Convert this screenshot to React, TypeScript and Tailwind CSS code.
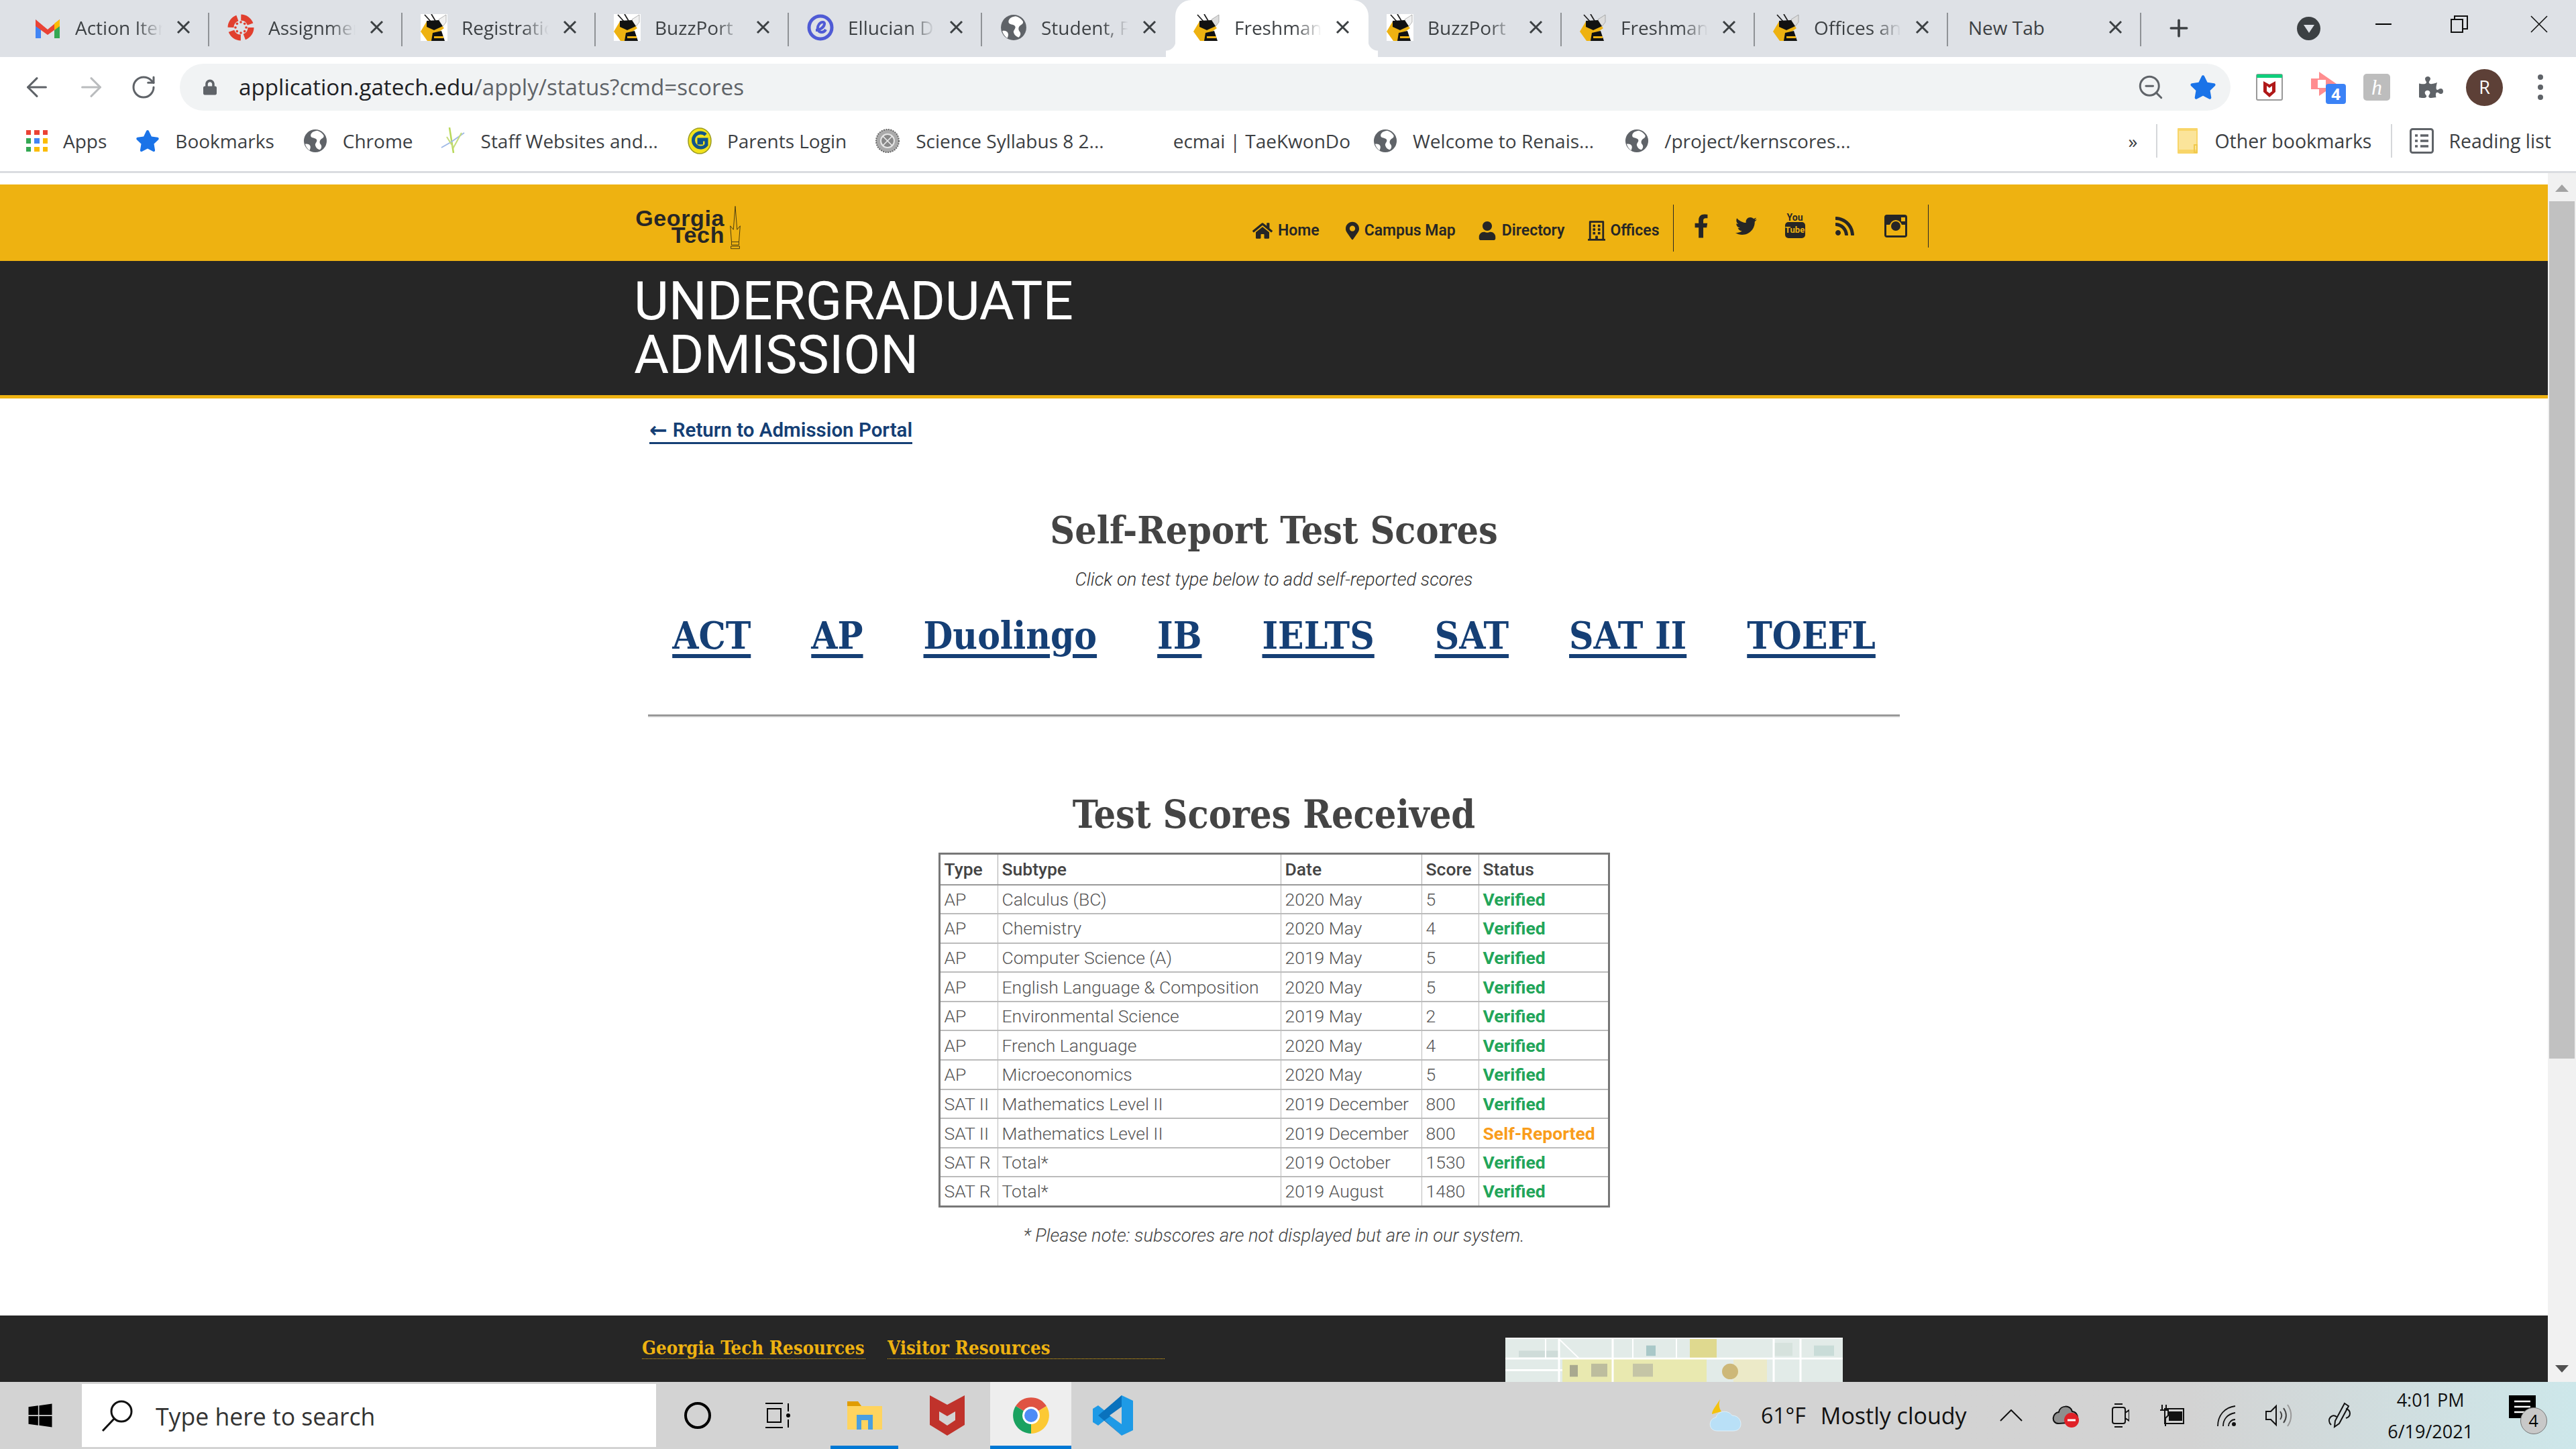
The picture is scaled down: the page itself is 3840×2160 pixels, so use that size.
import { ArrowLeft, ArrowRight, RotateCw, Plus, Minus, ZoomOut } from "lucide-react";
import {
  FaFacebookF,
  FaHome,
  FaLock,
  FaMapMarkerAlt,
  FaPuzzlePiece,
  FaRegBuilding,
  FaRss,
  FaStar,
  FaTwitter,
  FaUser,
  FaWindows,
} from "react-icons/fa";

const UI_FONT = "font-['Open_Sans','Noto_Sans',sans-serif]";

function Cross({ className = "" }: { className?: string }) {
  return (
    <svg viewBox="0 0 21 21" className={className}>
      <path d="M2 2L19 19M19 2L2 19" stroke="currentColor" strokeWidth="3" fill="none" />
    </svg>
  );
}

function Gmail() {
  return (
    <svg viewBox="0 0 40 40" className="h-[40px] w-[40px]">
      <path d="M2 8v28h8V18z" fill="#4285f4" />
      <path d="M38 8v28h-8V18z" fill="#34a853" />
      <path d="M2 8l18 15L38 8v10L20 31 2 18z" fill="#ea4335" />
      <path d="M30 14l8-6v10l-8 6z" fill="#fbbc04" />
    </svg>
  );
}

function Canvas() {
  const angles = [0, 45, 90, 135, 180, 225, 270, 315];
  return (
    <svg viewBox="0 0 40 40" className="h-[40px] w-[40px]">
      <circle cx="20" cy="20" r="15" fill="none" stroke="#e13f2e" strokeWidth="9" strokeDasharray="18 5.5" />
      {angles.map((a) => (
        <circle
          key={a}
          cx={20 + 8 * Math.cos((a * Math.PI) / 180)}
          cy={20 + 8 * Math.sin((a * Math.PI) / 180)}
          r="1.8"
          fill="#e13f2e"
        />
      ))}
    </svg>
  );
}

function Buzz({ plain = false }: { plain?: boolean }) {
  return (
    <svg viewBox="0 0 40 40" className="h-[40px] w-[40px]">
      {!plain && <rect width="40" height="40" fill="#fff" />}
      <path d="M6 1l10 11M16 0l6 10" stroke="#222" strokeWidth="1.8" fill="none" />
      <path d="M27 8l11-7v11l-7 9z" fill={plain ? "#dcdcdc" : "#f1f1f1"} stroke="#888" strokeWidth="0.6" />
      <path d="M9 11h17l9 10-10 7 3 12H10L0 26z" fill="#eeb211" />
      <path d="M9 10l18-1 6 9-13 6-11-5z" fill="#111" />
      <path d="M18 28l13-3 5 15H16z" fill="#111" />
      <path d="M20 33h14v3H20z" fill="#eeb211" />
    </svg>
  );
}

function Ellucian() {
  return (
    <svg viewBox="0 0 40 40" className="h-[40px] w-[40px]">
      <circle cx="20" cy="20" r="17" fill="none" stroke="#4f5bd5" strokeWidth="5" />
      <path d="M13 24c6 0 12-4 13-9 1-4-5-4-8 0-4 6-2 12 4 12 3 0 5-2 6-4" fill="none" stroke="#4f5bd5" strokeWidth="4" />
    </svg>
  );
}

function Globe({ size = "h-[38px] w-[38px]" }: { size?: string }) {
  return (
    <svg viewBox="0 0 38 38" className={size}>
      <circle cx="19" cy="19" r="18" fill="#5f6368" />
      <path d="M22 3c-8 1-11 5-10 9 1 3 7 2 9 5s-3 6-2 9c1 4 4 6 7 7 4-3 3-7 1-9-2-3-1-7 3-9 2-1 3-3 2-5-3-4-6-6-10-7z" fill="#fff" />
      <path d="M3 24c3-1 7 0 8 3 1 2 0 5-1 7-3-2-6-6-7-10z" fill="#fff" />
    </svg>
  );
}

function Apps() {
  const dots = ["#ea4335", "#ea4335", "#ea4335", "#34a853", "#4285f4", "#fbbc04", "#34a853", "#fbbc04", "#fbbc04"];
  return (
    <div className="grid h-[32px] w-[32px] grid-cols-3 gap-[5px]">
      {dots.map((c, i) => (
        <span key={i} style={{ background: c }} />
      ))}
    </div>
  );
}

function StaffIcon() {
  return (
    <svg viewBox="0 0 38 40" className="h-[40px] w-[38px]">
      <path d="M14 0l6 38" stroke="#b8d85a" strokeWidth="2.5" fill="none" />
      <path d="M2 30l14-8 20-14" stroke="#9fb9e6" strokeWidth="2" fill="none" />
      <path d="M10 14l10 16 12-22" stroke="#c5dc7a" strokeWidth="2" fill="none" />
    </svg>
  );
}

function ParentsG() {
  return (
    <svg viewBox="0 0 36 40" className="h-[40px] w-[36px]">
      <ellipse cx="18" cy="20" rx="17" ry="19" fill="#f2e21c" stroke="#9a9a20" strokeWidth="1.5" />
      <path d="M27 11a11 11 0 1 0 1 15v-8H17v5h6" fill="none" stroke="#12558a" strokeWidth="5" />
    </svg>
  );
}

function Seal() {
  return (
    <svg viewBox="0 0 38 38" className="h-[38px] w-[38px]">
      <circle cx="19" cy="19" r="17" fill="#aaa" stroke="#666" strokeWidth="2" strokeDasharray="2 1.5" />
      <circle cx="19" cy="19" r="10" fill="#888" stroke="#e6e6e6" strokeWidth="2" />
      <path d="M12 12l14 14M26 12L12 26" stroke="#eee" strokeWidth="1.5" />
    </svg>
  );
}

function FolderIcon() {
  return (
    <svg viewBox="0 0 30 38" className="h-[38px] w-[30px]">
      <rect x="0" y="0" width="30" height="38" rx="1" fill="#f8d568" />
      <rect x="2" y="4" width="26" height="28" fill="#fbe49a" />
      <path d="M25 36V25h4v11z" fill="none" stroke="#f0c94c" strokeWidth="2" />
    </svg>
  );
}

function ReadingIcon() {
  return (
    <svg viewBox="0 0 36 38" className="h-[38px] w-[36px]">
      <rect x="1.5" y="1.5" width="33" height="35" rx="3" fill="none" stroke="#5f6368" strokeWidth="3" />
      <path d="M8 11h4M16 11h12M8 19h4M16 19h12M8 27h4M16 27h12" stroke="#5f6368" strokeWidth="3.5" />
    </svg>
  );
}

const TABS = [
  { title: "Action Items", icon: <Gmail /> },
  { title: "Assignments", icon: <Canvas /> },
  { title: "Registration", icon: <Buzz /> },
  { title: "BuzzPort | Home", icon: <Buzz /> },
  { title: "Ellucian Degree", icon: <Ellucian /> },
  { title: "Student, Faculty", icon: <Globe size="h-[40px] w-[40px]" /> },
  { title: "Freshman Admission", icon: <Buzz plain />, active: true },
  { title: "BuzzPort | Home", icon: <Buzz /> },
  { title: "Freshman Info", icon: <Buzz plain /> },
  { title: "Offices and Units", icon: <Buzz plain /> },
];

const BOOKMARKS = [
  { label: "Apps", icon: <Apps />, cls: "ml-[39px]" },
  { label: "Bookmarks", icon: <FaStar className="h-[34px] w-[36px] text-[#1a73e8]" />, cls: "ml-[43px]" },
  { label: "Chrome", icon: <Globe size="h-[36px] w-[36px]" />, cls: "ml-[43px]" },
  { label: "Staff Websites and...", icon: <StaffIcon />, cls: "ml-[40px]" },
  { label: "Parents Login", icon: <ParentsG />, cls: "ml-[44px]" },
  { label: "Science Syllabus 8 2...", icon: <Seal />, cls: "ml-[42px]" },
  { label: "ecmai | TaeKwonDo", icon: null, cls: "ml-[103px]" },
  { label: "Welcome to Renais...", icon: <Globe size="h-[36px] w-[36px]" />, cls: "ml-[34px]" },
  { label: "/project/kernscores...", icon: <Globe size="h-[36px] w-[36px]" />, cls: "ml-[46px]" },
];

const SCORES = [
  ["AP", "Calculus (BC)", "2020 May", "5", "Verified"],
  ["AP", "Chemistry", "2020 May", "4", "Verified"],
  ["AP", "Computer Science (A)", "2019 May", "5", "Verified"],
  ["AP", "English Language & Composition", "2020 May", "5", "Verified"],
  ["AP", "Environmental Science", "2019 May", "2", "Verified"],
  ["AP", "French Language", "2020 May", "4", "Verified"],
  ["AP", "Microeconomics", "2020 May", "5", "Verified"],
  ["SAT II", "Mathematics Level II", "2019 December", "800", "Verified"],
  ["SAT II", "Mathematics Level II", "2019 December", "800", "Self-Reported"],
  ["SAT R", "Total*", "2019 October", "1530", "Verified"],
  ["SAT R", "Total*", "2019 August", "1480", "Verified"],
];

const TEST_TYPES = ["ACT", "AP", "Duolingo", "IB", "IELTS", "SAT", "SAT II", "TOEFL"];

function TabStrip() {
  return (
    <div className={`flex h-[85px] shrink-0 items-start bg-[#dee1e6] pl-[24px] ${UI_FONT}`}>
      {TABS.map((tab, i) => {
        const hideLine = tab.active || TABS[i + 1]?.active;
        return (
          <div
            key={i}
            className={`relative flex h-[85px] w-[288px] shrink-0 items-center pl-[27px] ${tab.active ? "rounded-t-[24px] bg-white" : ""}`}
          >
            <div className="-mt-[4px] flex items-center">
              {tab.icon}
              <span className="ml-[21px] w-[130px] overflow-hidden whitespace-nowrap bg-linear-to-r from-[#3c4043] from-70% to-transparent bg-clip-text text-[28px] leading-[40px] text-transparent">
                {tab.title}
              </span>
              <Cross className="ml-[21px] h-[21px] w-[21px] text-[#3c4043]" />
            </div>
            {!hideLine && <span className="absolute top-[19px] right-0 h-[50px] w-[2px] bg-[#8f9296]" />}
            {tab.active && (
              <>
                <span className="absolute bottom-0 -left-[14px] h-[24px] w-[14px] bg-[radial-gradient(circle_at_0_0,transparent_14px,white_15px)]" />
                <span className="absolute -right-[14px] bottom-0 h-[24px] w-[14px] bg-[radial-gradient(circle_at_100%_0,transparent_14px,white_15px)]" />
              </>
            )}
          </div>
        );
      })}
      <div className="relative flex h-[85px] w-[288px] shrink-0 items-center pl-[30px]">
        <div className="-mt-[4px] flex items-center">
          <span className="w-[209px] text-[28px] leading-[40px] text-[#3c4043]">New Tab</span>
          <Cross className="h-[21px] w-[21px] text-[#3c4043]" />
        </div>
        <span className="absolute top-[19px] right-0 h-[50px] w-[2px] bg-[#8f9296]" />
      </div>
      <Plus className="mt-[22px] ml-[36px] h-[40px] w-[40px] text-[#3c4043]" strokeWidth={2.2} />
      <div className="mt-[25px] ml-[156px] flex h-[35px] w-[35px] items-center justify-center rounded-full bg-[#3c4043]">
        <span className="h-0 w-0 border-x-[8px] border-t-[12px] border-x-transparent border-t-[#dee1e6]" />
      </div>
      <Minus className="mt-[17px] ml-[75px] h-[38px] w-[38px] text-black" strokeWidth={1.4} />
      <svg viewBox="0 0 26 26" className="mt-[23px] ml-[81px] h-[26px] w-[26px]">
        <path d="M1 6h17v19H1zM6 6V1h19v19h-7" fill="none" stroke="#111" strokeWidth="2" />
      </svg>
      <svg viewBox="0 0 26 26" className="mt-[23px] ml-[93px] h-[26px] w-[26px]">
        <path d="M1 1L25 25M25 1L1 25" fill="none" stroke="#111" strokeWidth="1.6" />
      </svg>
    </div>
  );
}

function Toolbar() {
  return (
    <div className={`flex h-[80px] shrink-0 items-center bg-white pt-[10px] ${UI_FONT}`}>
      <ArrowLeft className="ml-[32px] h-[46px] w-[46px] text-[#5f6368]" strokeWidth={1.6} />
      <ArrowRight className="ml-[35px] h-[46px] w-[46px] text-[#babcbe]" strokeWidth={1.6} />
      <RotateCw className="ml-[35px] h-[40px] w-[40px] text-[#5f6368]" strokeWidth={1.8} />
      <div className="ml-[34px] flex h-[70px] w-[3057px] items-center rounded-full bg-[#f1f3f4]">
        <FaLock className="ml-[35px] h-[26px] w-[20px] text-[#5f6368]" />
        <span className="ml-[33px] text-[33.2px] text-[#202124]">
          application.gatech.edu<span className="text-[#5f6368]">/apply/status?cmd=scores</span>
        </span>
        <ZoomOut className="mr-[37px] ml-auto h-[42px] w-[42px] text-[#5f6368]" strokeWidth={1.7} />
        <FaStar className="mr-[21px] h-[38px] w-[40px] text-[#1a73e8]" />
      </div>
      <svg viewBox="0 0 40 40" className="ml-[38px] h-[40px] w-[40px]">
        <rect x="1" y="1" width="38" height="38" rx="2" fill="#fff" stroke="#999" strokeWidth="2" />
        <rect x="1" y="1" width="38" height="5" fill="#0fcf7c" />
        <path d="M11 11l9 5 9-5v16l-9 8-9-8z" fill="#b01818" />
        <path d="M16 18l4 3 4-3v8l-4 3-4-3z" fill="#fff" />
      </svg>
      <div className="relative ml-[40px] h-[50px] w-[55px]">
        <svg viewBox="0 0 42 40" className="h-[40px] w-[42px]">
          <path d="M14 2l26 18-26 18V28H2V12h12z" fill="#ff8d8f" />
          <path d="M12 14h12v12H12z" fill="#fff" />
        </svg>
        <span className="absolute right-[1px] bottom-0 flex h-[30px] w-[30px] items-center justify-center rounded-[4px] bg-[#3b82f6] text-[24px] font-bold text-white">
          4
        </span>
      </div>
      <div className="ml-[25px] flex h-[40px] w-[40px] items-center justify-center rounded-[5px] bg-[#bdbdbd] font-['Liberation_Serif',serif] text-[32px] text-white italic">
        h
      </div>
      <FaPuzzlePiece className="ml-[43px] h-[36px] w-[36px] text-[#5f6368]" />
      <div className="ml-[34px] flex h-[55px] w-[55px] items-center justify-center rounded-full bg-[#5d4037] text-[27px] text-white">
        R
      </div>
      <div className="ml-[52px] flex flex-col gap-[7px]">
        <span className="h-[8px] w-[8px] rounded-full bg-[#5f6368]" />
        <span className="h-[8px] w-[8px] rounded-full bg-[#5f6368]" />
        <span className="h-[8px] w-[8px] rounded-full bg-[#5f6368]" />
      </div>
    </div>
  );
}

function BookmarksBar() {
  return (
    <div className={`flex h-[93px] shrink-0 items-center border-b-[3px] border-[#dadce0] bg-white ${UI_FONT}`}>
      {BOOKMARKS.map((b) => (
        <div key={b.label} className={`flex items-center gap-[23px] ${b.cls}`}>
          {b.icon}
          <span className="text-[28px] whitespace-nowrap text-[#3c4043]">{b.label}</span>
        </div>
      ))}
      <span className="ml-auto text-[28px] text-[#3c4043]">»</span>
      <span className="ml-[28px] h-[50px] w-[2px] bg-[#d5d7da]" />
      <div className="ml-[30px] flex items-center gap-[25px]">
        <FolderIcon />
        <span className="text-[28.5px] whitespace-nowrap text-[#3c4043]">Other bookmarks</span>
      </div>
      <span className="ml-[29px] h-[50px] w-[2px] bg-[#d5d7da]" />
      <div className="mr-[37px] ml-[26px] flex items-center gap-[22px]">
        <ReadingIcon />
        <span className="text-[28.5px] whitespace-nowrap text-[#3c4043]">Reading list</span>
      </div>
    </div>
  );
}

function Logo() {
  return (
    <div className="relative h-[78px] w-[160px]">
      <div className="pt-[20px] font-['Liberation_Sans',sans-serif] text-[34px] leading-[25px] font-bold tracking-[0.6px] text-[#262626]">
        <div className="w-[135px] text-right">Georgia</div>
        <div className="w-[135px] text-right">Tech</div>
      </div>
      <svg viewBox="0 0 24 70" className="absolute top-[12px] left-[140px] h-[69px] w-[22px]">
        <path d="M12 0L9 38 4 32l2 26h12l2-26-5 6zM6 58v5h12v-5M5 65h14v4H5z" fill="none" stroke="#3d3413" strokeWidth="1" />
      </svg>
    </div>
  );
}

function NavLink({ icon, label, cls }: { icon: React.ReactNode; label: string; cls: string }) {
  return (
    <span className={`flex items-center gap-[8px] text-[23px] font-semibold text-[#262626] ${cls}`}>
      {icon}
      {label}
    </span>
  );
}

function Header() {
  return (
    <header className="mt-[17px] shrink-0 font-['Roboto',sans-serif]">
      <div className="flex h-[114px] items-center bg-[#eeb211] pl-[945px]">
        <Logo />
        <NavLink icon={<FaHome className="h-[30px] w-[30px]" />} label="Home" cls="ml-[762px] mt-[24px]" />
        <NavLink icon={<FaMapMarkerAlt className="h-[30px] w-[20px]" />} label="Campus Map" cls="ml-[39px] mt-[24px]" />
        <NavLink icon={<FaUser className="h-[28px] w-[28px]" />} label="Directory" cls="ml-[33px] mt-[24px]" />
        <NavLink icon={<FaRegBuilding className="h-[32px] w-[26px]" />} label="Offices" cls="ml-[34px] mt-[24px]" />
        <span className="mt-[16px] ml-[20px] h-[70px] w-[1px] bg-[#262626]" />
        <FaFacebookF className="mt-[10px] ml-[30px] h-[36px] w-[22px] text-[#262626]" />
        <FaTwitter className="mt-[10px] ml-[38px] h-[32px] w-[36px] text-[#262626]" />
        <div className="mt-[10px] ml-[40px] flex h-[40px] w-[30px] flex-col items-center text-[#262626]">
          <span className="text-[14px] leading-[14px] font-bold">You</span>
          <span className="flex h-[24px] w-[30px] items-center justify-center rounded-[5px] bg-[#262626] text-[13px] font-bold text-[#eeb211]">
            Tube
          </span>
        </div>
        <FaRss className="mt-[10px] ml-[43px] h-[32px] w-[32px] text-[#262626]" />
        <svg viewBox="0 0 34 34" className="mt-[10px] ml-[43px] h-[34px] w-[34px]">
          <rect width="34" height="34" rx="4" fill="#262626" />
          <rect x="3" y="15" width="28" height="16" fill="#eeb211" />
          <circle cx="17" cy="17" r="8" fill="#262626" stroke="#eeb211" strokeWidth="2" />
          <rect x="25" y="4" width="6" height="6" fill="#eeb211" />
        </svg>
        <span className="mt-[10px] ml-[31px] h-[64px] w-[1px] bg-[#262626]" />
      </div>
      <div className="h-[205px] border-b-[5px] border-[#eeb211] bg-[#262626] pt-[20px] pl-[945px] text-[80px] leading-[80px] font-normal tracking-[-0.1px] text-white">
        UNDERGRADUATE
        <br />
        ADMISSION
      </div>
    </header>
  );
}

function ScoresTable() {
  return (
    <table className="w-[998px] table-fixed border-collapse border-[3px] border-[#777] text-[26.5px] leading-[37px] font-light text-[#555]">
      <colgroup>
        <col className="w-[87px]" />
        <col className="w-[422px]" />
        <col className="w-[210px]" />
        <col className="w-[85px]" />
        <col className="w-[194px]" />
      </colgroup>
      <thead>
        <tr className="h-[46px] border-b-[2px] border-[#999] text-[#444]">
          {["Type", "Subtype", "Date", "Score", "Status"].map((h) => (
            <th key={h} className="border-x-[1px] border-[#aaa] px-[6px] py-0 text-left font-medium whitespace-nowrap">
              {h}
            </th>
          ))}
        </tr>
      </thead>
      <tbody>
        {SCORES.map((row, i) => (
          <tr key={i} className="h-[43.6px] border-b-[2px] border-[#bbb]">
            {row.map((cell, j) => (
              <td
                key={j}
                className={`border-x-[1px] border-[#bbb] px-[6px] py-0 whitespace-nowrap ${
                  j === 4 ? (cell === "Verified" ? "font-bold text-[#22a559]" : "font-bold text-[#f99d1c]") : ""
                }`}
              >
                {cell}
              </td>
            ))}
          </tr>
        ))}
      </tbody>
    </table>
  );
}

function MapThumb() {
  return (
    <svg viewBox="0 0 503 66" preserveAspectRatio="none" className="h-[66px] w-[503px] border-t-[2px] border-white">
      <rect width="503" height="66" fill="#e2ebe8" />
      <rect x="85" y="30" width="215" height="36" fill="#e9e9b0" />
      <rect x="275" y="0" width="40" height="30" fill="#dfd98f" />
      <rect x="340" y="30" width="50" height="36" fill="#eceac8" />
      <rect x="20" y="18" width="60" height="10" fill="#cfdcd9" />
      <rect x="210" y="10" width="14" height="16" fill="#a9c8c8" />
      <rect x="96" y="40" width="12" height="18" fill="#a9a98f" />
      <rect x="128" y="38" width="24" height="20" fill="#bdbd9e" />
      <rect x="190" y="38" width="30" height="20" fill="#c5c5a6" />
      <circle cx="335" cy="50" r="12" fill="#cdb878" />
      <rect x="400" y="6" width="28" height="20" fill="#d6e2dd" />
      <rect x="460" y="10" width="30" height="16" fill="#c9dcd8" />
      <path d="M0 30h503M80 0v66M160 0v66M400 0v66M440 0v66M0 48h85" stroke="#fff" strokeWidth="3" />
      <path d="M80 0l30 30M255 0v30M60 0v30M190 0v30" stroke="#fff" strokeWidth="2" />
    </svg>
  );
}

function Footer() {
  return (
    <footer className="flex h-[99px] shrink-0 bg-[#262626] pl-[957px]">
      <div className="flex h-[65px] w-[1287px] items-end gap-[33px] font-['DejaVu_Serif_Condensed','DejaVu_Serif',serif] text-[27.4px] leading-[32px] font-bold text-[#eeb211]">
        <span className="w-[333px] border-b-[1px] border-dotted border-[#eeb211] whitespace-nowrap">
          Georgia Tech Resources
        </span>
        <span className="w-[413px] border-b-[1px] border-dotted border-[#eeb211] whitespace-nowrap">
          Visitor Resources
        </span>
      </div>
      <div className="mt-[33px]">
        <MapThumb />
      </div>
    </footer>
  );
}

function MainPage() {
  return (
    <main className="flex min-w-0 flex-1 flex-col overflow-hidden bg-white">
      <Header />
      <a className="mt-[29px] ml-[968px] flex w-fit items-center gap-[8px] border-b-[3px] border-[#153f75] font-['Roboto',sans-serif] text-[29.5px] leading-[36px] font-semibold text-[#153f75]">
        <span className="font-['DejaVu_Sans',sans-serif] text-[32px] leading-[36px] font-bold">←</span>
        Return to Admission Portal
      </a>
      <section className="flex h-[1299px] flex-col items-center font-['Roboto',sans-serif]">
        <h1 className="mt-[93px] font-['DejaVu_Serif_Condensed','DejaVu_Serif',serif] text-[56.8px] leading-[70px] font-bold text-[#444]">
          Self-Report Test Scores
        </h1>
        <p className="mt-[23px] text-[27.3px] leading-[32px] font-light text-[#333] italic">
          Click on test type below to add self-reported scores
        </p>
        <div className="mt-[34px] flex gap-[90px] font-['DejaVu_Serif_Condensed','DejaVu_Serif',serif] text-[56.2px] leading-[66px] font-bold text-[#153f75]">
          {TEST_TYPES.map((t) => (
            <a key={t} className="underline decoration-[6px] underline-offset-[8px]">
              {t}
            </a>
          ))}
        </div>
        <div className="mt-[85px] h-[5px] w-[1866px] border-t-[3px] border-b-[2px] border-t-[#999] border-b-[#eee]" />
        <h2 className="mt-[109px] font-['DejaVu_Serif_Condensed','DejaVu_Serif',serif] text-[57px] leading-[70px] font-bold text-[#444]">
          Test Scores Received
        </h2>
        <div className="mt-[22px]">
          <ScoresTable />
        </div>
        <p className="mt-[26px] text-[27.3px] leading-[32px] font-light text-[#444] italic">
          * Please note: subscores are not displayed but are in our system.
        </p>
      </section>
      <Footer />
    </main>
  );
}

function ScrollBar() {
  return (
    <div className="flex w-[42px] shrink-0 flex-col items-center bg-[#f1f1f1]">
      <span className="mt-[17px] h-0 w-0 border-x-[10px] border-b-[11px] border-x-transparent border-b-[#a3a3a3]" />
      <span className="mt-[14px] h-[1278px] w-[38px] bg-[#c1c1c1]" />
      <span className="mt-auto mb-[14px] h-0 w-0 border-x-[10px] border-t-[11px] border-x-transparent border-t-[#505050]" />
    </div>
  );
}

function Taskbar() {
  return (
    <div className={`flex h-[100px] shrink-0 items-center bg-linear-to-r from-[#d3d3d3] from-85% to-[#cde7ea] ${UI_FONT}`}>
      <FaWindows className="ml-[40px] h-[40px] w-[40px] text-black" />
      <div className="mt-[3px] ml-[42px] flex h-[94px] w-[856px] items-center self-start bg-white">
        <svg viewBox="0 0 50 50" className="ml-[28px] h-[50px] w-[50px]">
          <circle cx="31" cy="19" r="15" fill="none" stroke="#111" strokeWidth="3" />
          <path d="M20 30L3 48" stroke="#111" strokeWidth="3" />
        </svg>
        <span className="mt-[3px] ml-[32px] text-[35.6px] text-[#333]">Type here to search</span>
      </div>
      <span className="ml-[42px] h-[40px] w-[40px] rounded-full border-[4px] border-black" />
      <svg viewBox="0 0 40 40" className="ml-[80px] h-[40px] w-[40px]">
        <path d="M1 2h26M1 38h26M4 10h20v20H4zM35 2v12M35 26v12" fill="none" stroke="#000" strokeWidth="2" />
        <circle cx="35" cy="20" r="3" fill="#000" />
      </svg>
      <div className="relative ml-[58px] flex h-[100px] w-[101px] items-center justify-center">
        <svg viewBox="0 0 52 42" className="h-[42px] w-[52px]">
          <path d="M0 0h16l5 7h31v35H0z" fill="#ffd45f" />
          <path d="M0 0h16l5 7H0z" fill="#e09c00" />
          <path d="M14 42V20h24v22h-7V28H21v14z" fill="#4a9fe0" />
        </svg>
        <span className="absolute inset-x-0 bottom-0 h-[5px] bg-[#0078d4]" />
      </div>
      <svg viewBox="0 0 52 60" className="ml-[47px] h-[60px] w-[52px]">
        <path d="M0 0l26 14L52 0v44L26 60 0 44z" fill="#c0322b" />
        <path d="M14 24l12 7 12-7v13l-12 8-12-8z" fill="#d3d3d3" />
      </svg>
      <div className="relative ml-[38px] flex h-[100px] w-[121px] items-center justify-center bg-[#eeeeee]">
        <svg viewBox="0 0 56 56" className="h-[56px] w-[56px]">
          <path d="M28 28L5 14A27 27 0 0 1 51 14z" fill="#df5343" />
          <path d="M28 28L51 14A27 27 0 0 1 28 55z" fill="#fcc934" />
          <path d="M28 28L28 55A27 27 0 0 1 5 14z" fill="#1aa260" />
          <circle cx="28" cy="28" r="13" fill="#fff" />
          <circle cx="28" cy="28" r="10" fill="#4e8cf6" />
        </svg>
        <span className="absolute inset-x-0 bottom-0 h-[5px] bg-[#0078d4]" />
      </div>
      <svg viewBox="0 0 60 60" className="ml-[32px] h-[60px] w-[60px]">
        <path d="M43 0l17 8v44l-17 8-25-23-10 8-8-5V20l8-5 10 8z" fill="#1e9ae6" />
        <path d="M43 0v60L18 37l25-18V0L8 30l35 30z" fill="#0a72bd" />
        <path d="M43 17L25 30l18 13z" fill="#d3d3d3" />
      </svg>
      <svg viewBox="0 0 56 48" className="ml-[857px] h-[48px] w-[56px]">
        <path d="M18 0c-6 10-12 16-12 22l14-4c-4-6-4-12-2-18z" fill="#f4c20d" />
        <path d="M14 47c-14 0-14-18-2-20 2-10 18-12 24-3 16 0 18 23 2 23z" fill="#b9e0f7" stroke="#dff1fb" />
      </svg>
      <span className="ml-[23px] text-[32px] text-[#111]">61°F</span>
      <span className="ml-[22px] text-[34px] text-[#111]">Mostly cloudy</span>
      <svg viewBox="0 0 34 18" className="ml-[49px] h-[18px] w-[34px]">
        <path d="M1 17L17 1l16 16" fill="none" stroke="#111" strokeWidth="2" />
      </svg>
      <svg viewBox="0 0 40 40" className="ml-[44px] h-[40px] w-[40px]">
        <path d="M10 32C-2 32 0 16 10 15 12 4 28 4 30 14c8 1 10 10 6 16z" fill="#8e8e8e" stroke="#111" strokeWidth="2" />
        <circle cx="29" cy="27" r="11" fill="#e02128" />
        <rect x="23" y="25.5" width="12" height="3" fill="#fff" />
      </svg>
      <svg viewBox="0 0 28 36" className="ml-[47px] h-[36px] w-[28px]">
        <rect x="3" y="6" width="19" height="24" rx="3" fill="none" stroke="#111" strokeWidth="2" />
        <path d="M22 14l6-4v16l-6-4M6 1h12M6 35h12" fill="none" stroke="#111" strokeWidth="2" />
      </svg>
      <svg viewBox="0 0 38 32" className="ml-[45px] h-[32px] w-[38px]">
        <rect x="8" y="6" width="28" height="22" fill="none" stroke="#111" strokeWidth="2" />
        <rect x="14" y="10" width="20" height="14" fill="#111" />
        <path d="M4 0v8M10 0v8M1 8h12v8l-4 4v12" fill="none" stroke="#111" strokeWidth="2" />
      </svg>
      <svg viewBox="0 0 30 32" className="ml-[47px] h-[32px] w-[30px]">
        <path d="M2 32C2 16 12 4 28 2M10 32c0-10 6-18 18-20M18 32c0-5 4-10 10-10" fill="none" stroke="#111" strokeWidth="1.8" />
        <circle cx="26" cy="29" r="3" fill="#111" />
      </svg>
      <svg viewBox="0 0 40 36" className="ml-[43px] h-[36px] w-[40px]">
        <path d="M1 12h7l8-8v28l-8-8H1z" fill="none" stroke="#111" strokeWidth="2" />
        <path d="M22 12c3 4 3 8 0 12M27 7c5 7 5 15 0 22" fill="none" stroke="#444" strokeWidth="2" />
        <path d="M33 2c7 10 7 22 0 32" fill="none" stroke="#999" strokeWidth="2" />
      </svg>
      <svg viewBox="0 0 40 40" className="ml-[52px] h-[40px] w-[40px]">
        <path d="M26 2l6 4-14 26-7 5 1-9zM6 34c-8-8 2-18 8-12M28 10c8 2 8 12 0 14" fill="none" stroke="#111" strokeWidth="2" />
      </svg>
      <div className="ml-[47px] flex w-[135px] flex-col items-center text-[27px] leading-[47px] text-[#111]">
        <span>4:01 PM</span>
        <span>6/19/2021</span>
      </div>
      <div className="relative ml-[49px] h-[60px] w-[60px]">
        <svg viewBox="0 0 40 34" className="absolute top-0 left-0 h-[34px] w-[40px]">
          <path d="M0 0h40v34H0z" fill="#000" />
          <path d="M8 9h24M8 17h24M8 25h24" stroke="#fff" strokeWidth="2.5" />
        </svg>
        <span className="absolute top-[18px] left-[17px] flex h-[40px] w-[40px] items-center justify-center rounded-full border-[1px] border-[#777] bg-[#c8c8c8] text-[25px] text-black">
          4
        </span>
      </div>
    </div>
  );
}

export default function App() {
  return (
    <div className="flex h-[2160px] w-[3840px] flex-col overflow-hidden bg-white">
      <TabStrip />
      <Toolbar />
      <BookmarksBar />
      <div className="flex min-h-0 flex-1">
        <MainPage />
        <ScrollBar />
      </div>
      <Taskbar />
    </div>
  );
}
